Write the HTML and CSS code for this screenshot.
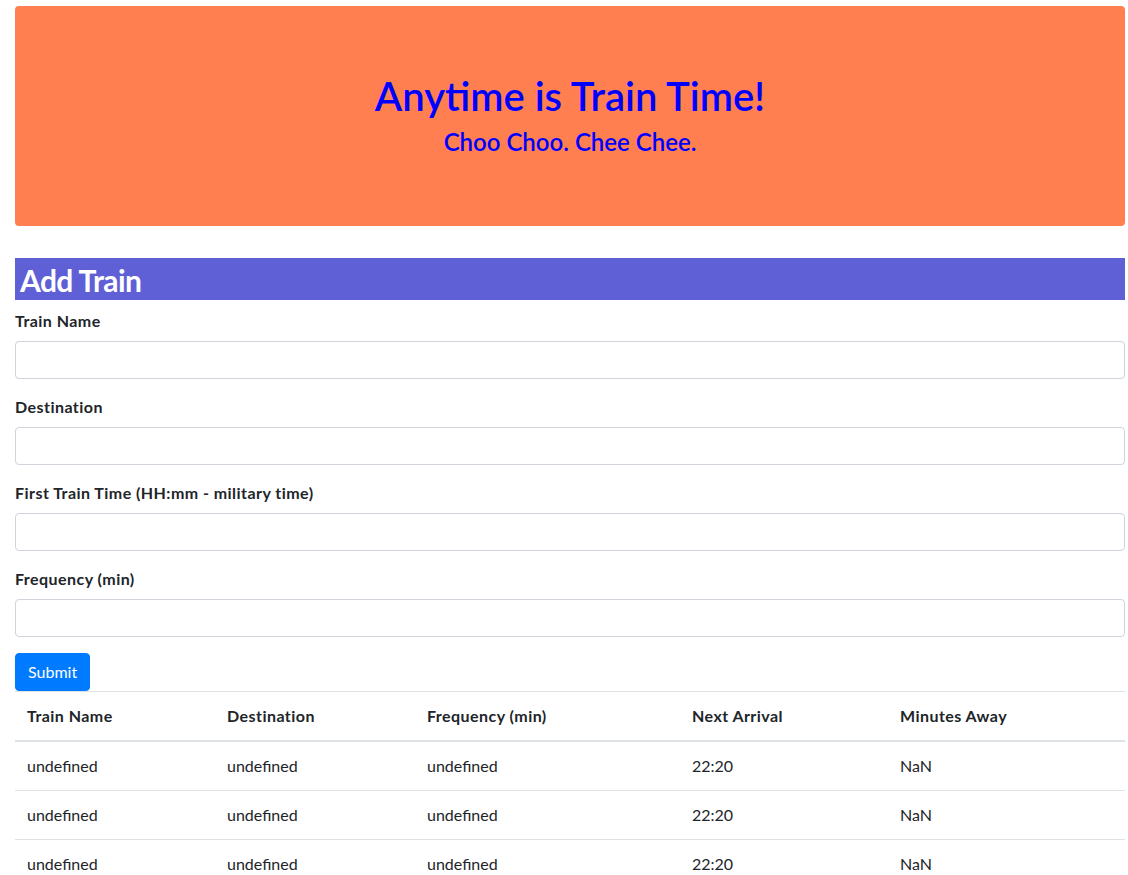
FILE: index.html
```html
<!DOCTYPE html>
<html lang="en">
<head>
<meta charset="utf-8">
<title>Train Time</title>
<link rel="stylesheet" href="styles.css">
</head>
<body>
<div class="container">
  <div class="jumbotron">
    <h1 class="title">Anytime is Train Time!</h1>
    <h4 class="subtitle">Choo Choo. Chee Chee.</h4>
  </div>

  <h2 class="section-title">Add Train</h2>
  <form class="train-form">
    <div class="form-group">
      <label class="form-label">Train Name</label>
      <input class="form-control" type="text">
    </div>
    <div class="form-group">
      <label class="form-label">Destination</label>
      <input class="form-control" type="text">
    </div>
    <div class="form-group">
      <label class="form-label">First Train Time (HH:mm - military time)</label>
      <input class="form-control" type="text">
    </div>
    <div class="form-group">
      <label class="form-label">Frequency (min)</label>
      <input class="form-control" type="text">
    </div>
    <button class="btn-submit" type="button">Submit</button>
  </form>

  <table class="train-table">
    <colgroup>
      <col class="col-a"><col class="col-b"><col class="col-c"><col class="col-d"><col>
    </colgroup>
    <thead>
      <tr><th>Train Name</th><th>Destination</th><th>Frequency (min)</th><th>Next Arrival</th><th>Minutes Away</th></tr>
    </thead>
    <tbody>
      <tr><td>undefined</td><td>undefined</td><td>undefined</td><td>22:20</td><td>NaN</td></tr>
      <tr><td>undefined</td><td>undefined</td><td>undefined</td><td>22:20</td><td>NaN</td></tr>
      <tr><td>undefined</td><td>undefined</td><td>undefined</td><td>22:20</td><td>NaN</td></tr>
    </tbody>
  </table>
</div>
</body>
</html>
```
FILE: styles.css
```css
* { box-sizing: border-box; }
html { scrollbar-width: none; }
html::-webkit-scrollbar { display: none; }
html, body { margin: 0; }
body {
  font-family: "Lato", "Open Sans", "Liberation Sans", sans-serif;
  font-size: 16px;
  line-height: 1.5;
  color: #212529;
  background: #fff;
}
.container {
  padding: 6px 3px 0 15px;
}
.jumbotron {
  background: #ff7f50;
  border-radius: 4px;
  padding: 66px 32px 62px;
  margin-bottom: 32px;
  text-align: center;
  color: #0000ff;
}
.title {
  font-size: 40px;
  font-weight: 600;
  line-height: 48px;
  margin: 0 0 8px;
}
.subtitle {
  font-size: 24px;
  font-weight: 600;
  line-height: 28px;
  margin: 0 0 8px;
}
.section-title {
  background: #5f5fd6;
  color: #fff;
  font-size: 30px;
  font-weight: 700;
  letter-spacing: -0.6px;
  line-height: 38px;
  padding: 3px 5px 1px;
  margin: 0 0 9px;
}
.form-group { margin-bottom: 16px; }
.form-label {
  display: inline-block;
  font-weight: 700;
  letter-spacing: 0.45px;
  margin-bottom: 8px;
}
.form-control {
  display: block;
  width: 100%;
  height: 38px;
  padding: 6px 12px;
  font: inherit;
  border: 1px solid #ced4da;
  border-radius: 4px;
  background: #fff;
}
.btn-submit {
  display: block;
  font: inherit;
  color: #fff;
  background: #007bff;
  border: 1px solid #007bff;
  border-radius: 4px;
  height: 38px;
  padding: 6px 12px;
}
.train-table {
  width: 100%;
  border-collapse: collapse;
}
.col-a { width: 200px; }
.col-b { width: 200px; }
.col-c { width: 265px; }
.col-d { width: 208px; }
.train-table th, .train-table td {
  padding: 12px;
  text-align: left;
  vertical-align: top;
  border-top: 1px solid #dee2e6;
}
.train-table thead th {
  font-weight: 700;
  letter-spacing: 0.45px;
  border-bottom: 2px solid #dee2e6;
}
```
